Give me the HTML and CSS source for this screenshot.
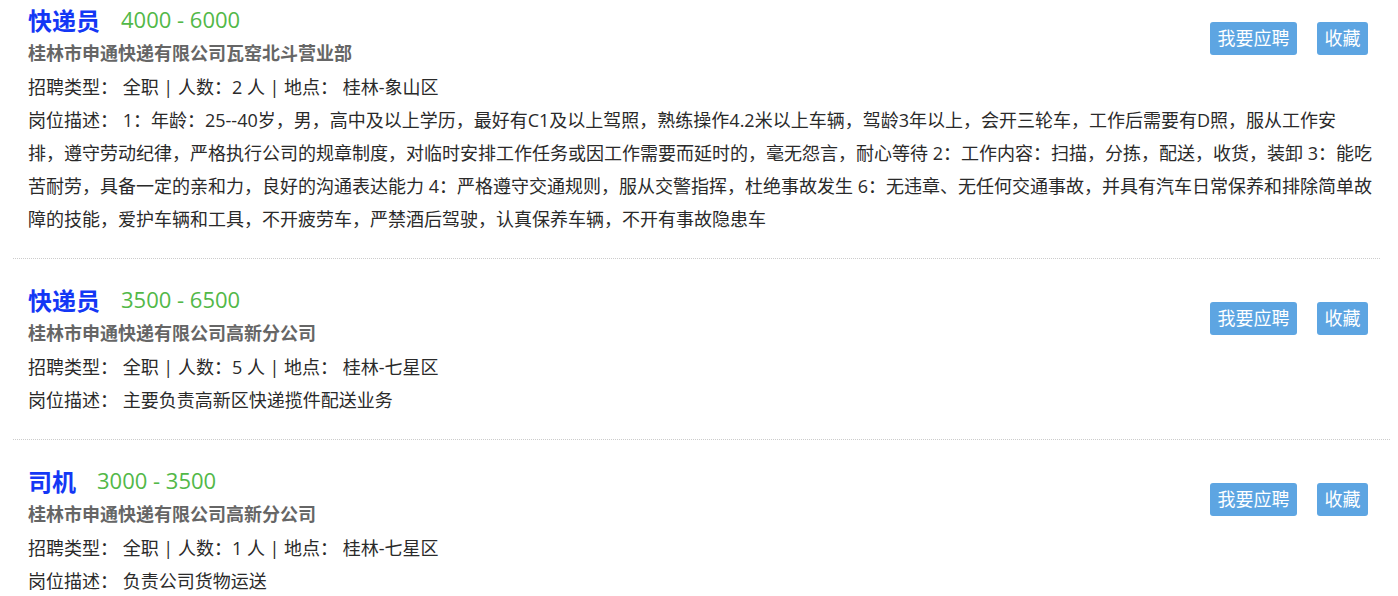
FILE: index.html
```html
<!DOCTYPE html>
<html lang="zh-CN">
<head>
<meta charset="utf-8">
<title>招聘信息</title>
<link rel="stylesheet" href="styles.css">
</head>
<body>
<ul class="jobs">
  <li class="job">
    <div class="job-top">
      <div class="job-main">
        <div class="job-head"><a class="job-title" href="#">快递员</a><span class="salary">4000 - 6000</span></div>
        <div class="company">桂林市申通快递有限公司瓦窑北斗营业部</div>
        <div class="meta">招聘类型：&nbsp;全职 | 人数：2 人 | 地点：&nbsp;桂林-象山区</div>
      </div>
      <div class="actions"><a class="btn" href="#">我要应聘</a><a class="btn" href="#">收藏</a></div>
    </div>
    <p class="desc">岗位描述：&nbsp;1：年龄：25--40岁，男，高中及以上学历，最好有C1及以上驾照，熟练操作4.2米以上车辆，驾龄3年以上，会开三轮车，工作后需要有D照，服从工作安<br>排，遵守劳动纪律，严格执行公司的规章制度，对临时安排工作任务或因工作需要而延时的，毫无怨言，耐心等待 2：工作内容：扫描，分拣，配送，收货，装卸 3：能吃<br>苦耐劳，具备一定的亲和力，良好的沟通表达能力 4：严格遵守交通规则，服从交警指挥，杜绝事故发生 6：无违章、无任何交通事故，并具有汽车日常保养和排除简单故<br>障的技能，爱护车辆和工具，不开疲劳车，严禁酒后驾驶，认真保养车辆，不开有事故隐患车</p>
  </li>
  <li class="job">
    <div class="job-top">
      <div class="job-main">
        <div class="job-head"><a class="job-title" href="#">快递员</a><span class="salary">3500 - 6500</span></div>
        <div class="company">桂林市申通快递有限公司高新分公司</div>
        <div class="meta">招聘类型：&nbsp;全职 | 人数：5 人 | 地点：&nbsp;桂林-七星区</div>
      </div>
      <div class="actions"><a class="btn" href="#">我要应聘</a><a class="btn" href="#">收藏</a></div>
    </div>
    <p class="desc">岗位描述：&nbsp;主要负责高新区快递揽件配送业务</p>
  </li>
  <li class="job">
    <div class="job-top">
      <div class="job-main">
        <div class="job-head"><a class="job-title" href="#">司机</a><span class="salary">3000 - 3500</span></div>
        <div class="company">桂林市申通快递有限公司高新分公司</div>
        <div class="meta">招聘类型：&nbsp;全职 | 人数：1 人 | 地点：&nbsp;桂林-七星区</div>
      </div>
      <div class="actions"><a class="btn" href="#">我要应聘</a><a class="btn" href="#">收藏</a></div>
    </div>
    <p class="desc">岗位描述：&nbsp;负责公司货物运送</p>
  </li>
</ul>
</body>
</html>
```
FILE: styles.css
```css
html, body {
  margin: 0;
  padding: 0;
  background: #fff;
}
body {
  font-family: "Open Sans", "Noto Sans CJK SC", sans-serif;
  font-size: 18px;
  color: #2a2a2a;
  overflow: hidden;
}
.jobs {
  list-style: none;
  margin: 0;
  padding: 0;
}
.job {
  margin: 0 8px 0 13px;
  padding: 23px 0 22px 15px;
  border-bottom: 1px dotted #ccc;
}
.job:first-child {
  padding-top: 2px;
  margin-right: 18px;
}
.job-top {
  display: flex;
  justify-content: space-between;
  align-items: flex-start;
}
.job-head {
  display: flex;
  align-items: center;
  gap: 21px;
  height: 34px;
}
.job-title {
  font-size: 24px;
  font-weight: bold;
  color: #1437f5;
  text-decoration: none;
}
.salary {
  font-size: 22px;
  color: #52b848;
}
.company {
  line-height: 34px;
  font-weight: bold;
  color: #666;
}
.meta {
  line-height: 34px;
}
.actions {
  display: flex;
  gap: 20px;
  margin-top: 20px;
  margin-right: 22px;
}
.job:first-child .actions {
  margin-right: 12px;
}
.btn {
  display: block;
  height: 33px;
  line-height: 33px;
  padding: 0 7.5px;
  background: #5da5e2;
  color: #fff;
  border-radius: 3px;
  text-decoration: none;
  font-size: 18px;
}
.desc {
  margin: 0;
  line-height: 33px;
  white-space: nowrap;
}
```
